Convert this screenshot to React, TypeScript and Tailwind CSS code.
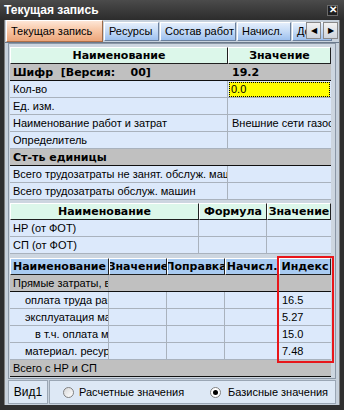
import React from 'react';

type Col = { w: number; label: string };

const grid1Rows: { name: string; value?: string; kind?: 'gray' | 'yellow' }[] = [
  { name: 'Шифр  [Версия:    00]', value: '19.2', kind: 'gray' },
  { name: 'Кол-во', value: '0.0', kind: 'yellow' },
  { name: 'Ед. изм.' },
  { name: 'Наименование работ и затрат', value: 'Внешние сети газоснабжения' },
  { name: 'Определитель' },
  { name: 'Ст-ть единицы', kind: 'gray' },
  { name: 'Всего трудозатраты не занят. обслуж. машин' },
  { name: 'Всего трудозатраты обслуж. машин' },
];

const grid3Cols: Col[] = [
  { w: 99, label: 'Наименование' },
  { w: 58, label: 'Значение' },
  { w: 58, label: 'Поправка' },
  { w: 54, label: 'Начисл.' },
  { w: 52, label: 'Индекс' },
];

const grid3Rows: { name: string; indent: number; index?: string; gray?: boolean }[] = [
  { name: 'Прямые затраты, всего', indent: 3, gray: true },
  { name: 'оплата труда рабочих', indent: 15, index: '16.5' },
  { name: 'эксплуатация машин', indent: 15, index: '5.27' },
  { name: 'в т.ч. оплата механизаторов', indent: 25, index: '15.0' },
  { name: 'материал. ресурсы', indent: 15, index: '7.48' },
  { name: 'Всего с НР и СП', indent: 3, gray: true },
];

function HeadCell({ w, children, blue }: { w: number; children: React.ReactNode; blue?: boolean }) {
  return (
    <div
      style={{ width: w }}
      className={`h-full shrink-0 flex items-center justify-center overflow-hidden whitespace-nowrap border-r border-b border-r-[#202020] border-b-[#202020] border-t border-l border-t-white border-l-white font-['DejaVu_Sans',sans-serif] font-bold text-[11px] ${blue ? 'bg-[#a9cbf1]' : 'bg-[#dcf7ea]'}`}
    >
      {children}
    </div>
  );
}

function TabBtn({ label, w }: { label: string; w: number }) {
  return (
    <div
      style={{ width: w }}
      className="h-[19px] mb-[1px] shrink-0 overflow-hidden whitespace-nowrap pl-[4px] flex items-center text-[11px] bg-gradient-to-b from-[#e4eefb] via-[#c4daf6] to-[#9dc0ee] border border-t-white border-l-white border-r-[#6a7f9c] border-b-[#6a7f9c]"
    >
      {label}
    </div>
  );
}

export default function App() {
  return (
    <div className="w-[344px] h-[410px] bg-[#2f2f2f] flex flex-col overflow-hidden text-black text-[11px] font-['Liberation_Sans',Arial,sans-serif] leading-none">
      {/* заголовок окна */}
      <div className="h-[20px] shrink-0 flex items-center justify-between pl-[4px] pr-[6px] bg-gradient-to-b from-[#4b4b4b] to-[#2c2c2c] text-white font-bold text-[12px]">
        <span>Текущая запись</span>
        <span className="w-[11px] h-[11px] flex items-center justify-center bg-[#1f1f1f] border border-[#6b6b6b] text-[10px] font-bold leading-none">✕</span>
      </div>

      <div className="flex-1 mx-[4px] mb-[5px] bg-[#c7d1dc] border-l border-r border-[#7d7d7d] flex flex-col">
        {/* вкладки */}
        <div className="relative h-[23px] shrink-0 flex items-end pl-[1px] gap-[1px] border-b border-[#6b7a8c] overflow-hidden">
          <div className="h-[22px] w-[97px] shrink-0 pl-[4px] flex items-center whitespace-nowrap text-[11px] bg-gradient-to-b from-[#fde6d6] via-[#f7c4a2] to-[#eba57a] border border-t-white border-l-white border-r-[#9a6a4a] border-b-[#b07048]">
            Текущая запись
          </div>
          <TabBtn label="Ресурсы" w={55} />
          <TabBtn label="Состав работ" w={76} />
          <TabBtn label="Начисл." w={54} />
          <TabBtn label="Доп." w={40} />
          <div className="absolute right-[1px] bottom-[3px] flex gap-[2px]">
            <div className="h-[17px] w-[15px] flex items-center justify-center bg-gradient-to-b from-[#f2f2f2] to-[#cfd5dd] border border-[#8a8a8a] text-[8px]">◀</div>
            <div className="h-[17px] w-[15px] flex items-center justify-center bg-gradient-to-b from-[#f2f2f2] to-[#cfd5dd] border border-[#8a8a8a] text-[8px]">▶</div>
          </div>
        </div>

        {/* содержимое */}
        <div className="mx-[3px] h-[336px] shrink-0 border border-[#8b97a6] bg-[#cdd6e0] pt-[3px] pl-[1px] pr-[5px] flex flex-col">
          {/* таблица 1 */}
          <div className="flex flex-col w-[321px]">
            <div className="h-[17px] flex">
              <HeadCell w={218}>Наименование</HeadCell>
              <HeadCell w={103}>Значение</HeadCell>
            </div>
            {grid1Rows.map((r) => (
              <div
                key={r.name}
                className={`h-[17px] flex border-b ${r.kind === 'gray' ? 'bg-[#c0c0c0] border-b-[#101010] font-bold text-[11px] font-["DejaVu_Sans",sans-serif]' : 'bg-[#dce9fb] border-b-[#a9b2bd]'}`}
              >
                <div className={`w-[218px] shrink-0 pl-[3px] flex items-center overflow-hidden whitespace-pre ${r.kind === 'gray' ? '' : 'border-r border-[#a9b2bd]'}`}>
                  {r.name}
                </div>
                <div className="w-[103px] shrink-0 flex items-center overflow-hidden whitespace-nowrap">
                  {r.kind === 'yellow' ? (
                    <div className="w-[101px] h-[15px] ml-[1px] bg-[#ffff00] border border-dotted border-black pl-[1px] flex items-center">{r.value}</div>
                  ) : (
                    <span className="pl-[4px]">{r.value}</span>
                  )}
                </div>
              </div>
            ))}
          </div>

          {/* таблица 2 */}
          <div className="flex flex-col w-[321px] mt-[3px]">
            <div className="h-[17px] flex">
              <HeadCell w={189}>Наименование</HeadCell>
              <HeadCell w={68}>Формула</HeadCell>
              <HeadCell w={64}>Значение</HeadCell>
            </div>
            {['НР (от ФОТ)', 'СП (от ФОТ)'].map((n) => (
              <div key={n} className="h-[17px] flex bg-[#dce9fb] border-b border-b-[#a9b2bd]">
                <div className="w-[189px] shrink-0 pl-[3px] flex items-center border-r border-[#a9b2bd]">{n}</div>
                <div className="w-[68px] shrink-0 border-r border-[#a9b2bd]" />
                <div className="w-[64px] shrink-0" />
              </div>
            ))}
          </div>

          {/* таблица 3 */}
          <div className="relative flex flex-col w-[321px] mt-[4px]">
            <div className="h-[17px] flex">
              {grid3Cols.map((c) => (
                <HeadCell key={c.label} w={c.w} blue>
                  {c.label}
                </HeadCell>
              ))}
            </div>
            {grid3Rows.map((r) => (
              <div
                key={r.name}
                className={`h-[17px] flex border-b ${r.gray ? 'bg-[#c0c0c0] border-b-[#101010]' : 'bg-[#dce9fb] border-b-[#a9b2bd]'}`}
              >
                <div
                  style={{ paddingLeft: r.indent }}
                  className={`w-[99px] shrink-0 flex items-center overflow-hidden whitespace-nowrap ${r.gray && r.name.startsWith('Всего') ? 'w-[200px]' : 'border-r border-[#a9b2bd]'}`}
                >
                  {r.name}
                </div>
                {!(r.gray && r.name.startsWith('Всего')) && (
                  <>
                    <div className={`w-[58px] shrink-0 ${r.gray ? '' : 'border-r border-[#a9b2bd]'}`} />
                    <div className={`w-[58px] shrink-0 ${r.gray ? '' : 'border-r border-[#a9b2bd]'}`} />
                    <div className={`w-[54px] shrink-0 ${r.gray ? '' : 'border-r border-[#a9b2bd]'}`} />
                    <div className="w-[52px] shrink-0 pl-[3px] flex items-center">{r.index}</div>
                  </>
                )}
              </div>
            ))}
            <div className="absolute left-[267px] top-[-2px] w-[57px] h-[107px] border-2 border-[#e8161a]" />
          </div>
        </div>

        {/* нижняя панель */}
        <div className="h-[24px] mt-[1px] mx-[3px] shrink-0 flex text-[11px] whitespace-nowrap">
          <div className="w-[40px] shrink-0 border border-[#9aa6b4] bg-[#dde8f5] flex items-center justify-center text-[12px]">Вид1</div>
          <div className="flex-1 min-w-0 ml-[1px] border border-[#9aa6b4] bg-[#dde8f5] flex items-center overflow-hidden">
            <span className="ml-[13px] shrink-0 w-[11px] h-[11px] rounded-full border border-[#808080] bg-gradient-to-br from-[#d8d8d8] to-white" />
            <span className="ml-[5px] shrink-0 w-[126px]">Расчетные значения</span>
            <span className="ml-[5px] shrink-0 w-[11px] h-[11px] rounded-full border border-[#808080] bg-white flex items-center justify-center">
              <span className="w-[5px] h-[5px] rounded-full bg-black" />
            </span>
            <span className="ml-[7px] shrink-0">Базисные значения</span>
          </div>
        </div>
      </div>
    </div>
  );
}
